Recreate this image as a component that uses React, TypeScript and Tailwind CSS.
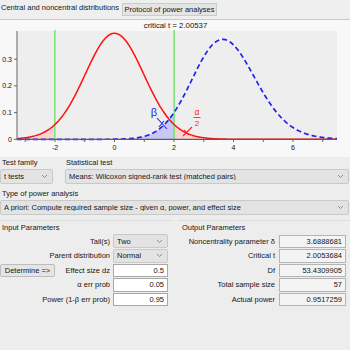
import React from "react";

const NU = 53.4309905;
const DELTA = 3.6888681;
const TC = 2.0053684;

function lgamma(x: number): number {
  const c = [
    0.99999999999980993, 676.5203681218851, -1259.1392167224028, 771.32342877765313,
    -176.61502916214059, 12.507343278686905, -0.13857109526572012, 9.9843695780195716e-6,
    1.5056327351493116e-7,
  ];
  if (x < 0.5) return Math.log(Math.PI / Math.sin(Math.PI * x)) - lgamma(1 - x);
  x -= 1;
  let a = c[0];
  const t = x + 7.5;
  for (let i = 1; i < 9; i++) a += c[i] / (x + i);
  return 0.5 * Math.log(2 * Math.PI) + (x + 0.5) * Math.log(t) - t + Math.log(a);
}

const LC = lgamma((NU + 1) / 2) - lgamma(NU / 2) - 0.5 * Math.log(NU * Math.PI);
function tpdf(t: number) {
  return Math.exp(LC - ((NU + 1) / 2) * Math.log(1 + (t * t) / NU));
}
const LG = lgamma(NU / 2);
function nctpdf(t: number) {
  const n = 300;
  const a = 0.4;
  const b = 1.8;
  const h = (b - a) / n;
  let sum = 0;
  for (let i = 0; i <= n; i++) {
    const s = a + i * h;
    const x = NU * s * s;
    const lf = (NU / 2 - 1) * Math.log(x) - x / 2 - (NU / 2) * Math.LN2 - LG;
    const g = Math.exp(lf) * 2 * NU * s;
    const z = t * s - DELTA;
    const phi = Math.exp((-z * z) / 2) / Math.sqrt(2 * Math.PI);
    const w = i === 0 || i === n ? 0.5 : 1;
    sum += w * s * phi * g;
  }
  return sum * h;
}

const X = (t: number) => 114.5 + t * 29.75;
const Y = (p: number) => 139.3 - p * 267;
const T0 = -3.28;
const T1 = 7.48;

function curve(f: (t: number) => number, a: number, b: number, step = 0.03) {
  const pts: string[] = [];
  for (let t = a; t < b; t += step) pts.push(`${X(t).toFixed(2)},${Y(f(t)).toFixed(2)}`);
  pts.push(`${X(b).toFixed(2)},${Y(f(b)).toFixed(2)}`);
  return pts;
}
function area(f: (t: number) => number, a: number, b: number) {
  const pts = curve(f, a, b, 0.02);
  return `M${X(a).toFixed(2)},${Y(0)} L${pts.join(" L")} L${X(b).toFixed(2)},${Y(0)} Z`;
}

function Chart() {
  const red = "M" + curve(tpdf, T0, T1).join(" L");
  const blue = "M" + curve(nctpdf, T0, T1).join(" L");
  const ticks: number[] = [];
  for (let i = -3; i <= 7; i++) ticks.push(i);
  const lbl = { fontFamily: '"Liberation Sans", Arial, sans-serif' };
  return (
    <svg width={350} height={137} viewBox="0 20 350 137" className="block">
      <rect x={0} y={20} width={350} height={137} fill="#f8f8f8" />
      <rect x={17} y={31} width={320} height={108.3} fill="#eeeeee" />
      <text x={175.5} y={27.5} fontSize={7.8} textAnchor="middle" fill="#111" style={lbl}>
        critical t = 2.00537
      </text>
      <path d={area(tpdf, T0, -TC)} fill="#fbd3d3" />
      <path d={area(tpdf, TC, T1)} fill="#fbd3d3" />
      <path d={area(nctpdf, T0, TC)} fill="#c9c9f7" />
      <line x1={X(-TC)} y1={30} x2={X(-TC)} y2={139.3} stroke="#66e266" strokeWidth={1.3} />
      <line x1={X(TC)} y1={30} x2={X(TC)} y2={139.3} stroke="#66e266" strokeWidth={1.3} />
      <path d={red} fill="none" stroke="#ff1010" strokeWidth={1.5} />
      <path d={blue} fill="none" stroke="#2222ee" strokeWidth={1.7} strokeDasharray="5 3" />
      {/* axes */}
      <line x1={17} y1={31} x2={17} y2={139.3} stroke="#666" strokeWidth={1} />
      <line x1={17} y1={139.3} x2={337} y2={139.3} stroke="#6b5656" strokeWidth={1.3} />
      {[0, 0.1, 0.2, 0.3].map((v) => (
        <g key={v}>
          <line x1={14} y1={Y(v)} x2={17} y2={Y(v)} stroke="#666" strokeWidth={1} />
          <text x={12} y={Y(v) + 2.5} fontSize={7} textAnchor="end" fill="#111" style={lbl}>
            {v === 0 ? "0" : v.toFixed(1)}
          </text>
        </g>
      ))}
      {ticks.map((t) => (
        <line key={t} x1={X(t)} y1={139.3} x2={X(t)} y2={142} stroke="#666" strokeWidth={1} />
      ))}
      {[-2, 0, 2, 4, 6].map((t) => (
        <text key={t} x={X(t)} y={149.5} fontSize={7} textAnchor="middle" fill="#111" style={lbl}>
          {t === -2 ? "-2" : String(t)}
        </text>
      ))}
      {/* beta label */}
      <text x={154} y={116} fontSize={11} textAnchor="middle" fill="#2828ee" style={lbl}>
        β
      </text>
      <line x1={157} y1={118} x2={167} y2={129} stroke="#2828ee" strokeWidth={1.1} />
      <line x1={159} y1={127} x2={164} y2={121} stroke="#2828ee" strokeWidth={1.1} />
      {/* alpha/2 label */}
      <text x={197} y={115} fontSize={8.5} textAnchor="middle" fill="#ff2222" style={lbl}>
        α
      </text>
      <line x1={193.5} y1={117.5} x2={200.5} y2={117.5} stroke="#ff2222" strokeWidth={0.9} />
      <text x={197} y={125.5} fontSize={8} textAnchor="middle" fill="#ff2222" style={lbl}>
        2
      </text>
      <line x1={192} y1={127} x2={183} y2={136} stroke="#ff2222" strokeWidth={1.1} />
      <line x1={184} y1={130} x2={189} y2={135} stroke="#ff2222" strokeWidth={1.1} />
    </svg>
  );
}

function Chevron() {
  return (
    <svg width={7} height={5} viewBox="0 0 7 5" className="shrink-0">
      <polyline points="1,1 3.5,3.5 6,1" fill="none" stroke="#8c8c8c" strokeWidth={1} />
    </svg>
  );
}

function Combo({ label, className }: { label: string; className: string }) {
  return (
    <div
      className={`flex items-center justify-between border border-[#c9c9c9] bg-[#e3e3e3] rounded-[2px] pl-[3px] pr-[4px] ${className}`}
    >
      <span className="whitespace-nowrap overflow-hidden">{label}</span>
      <Chevron />
    </div>
  );
}

function InBox({ v }: { v: string }) {
  return (
    <div className="h-[13.5px] w-[55px] border border-[#a8a8a8] bg-white flex items-center justify-end pr-[3px]">
      {v}
    </div>
  );
}
function OutBox({ v }: { v: string }) {
  return (
    <div className="h-[13.5px] w-[67px] border border-[#b4b4b4] bg-[#f4f4f4] flex items-center justify-end pr-[3px]">
      {v}
    </div>
  );
}

export default function App() {
  return (
    <div className="w-[350px] h-[350px] overflow-hidden bg-[#ededed] text-[#161616] text-[7.5px] leading-none font-['Liberation_Sans',Arial,sans-serif]">
      {/* tabs */}
      <div className="h-[20px] flex items-start border-b border-[#c8c8c8] bg-[#efefef]">
        <div className="h-[16px] pl-[1px] flex items-center whitespace-nowrap">
          Central and noncentral distributions
        </div>
        <div className="ml-[3px] mt-[3px] h-[13px] w-[95px] flex items-center justify-center whitespace-nowrap border border-[#cbcbcb] bg-[#e4e4e4]">
          Protocol of power analyses
        </div>
      </div>
      <Chart />
      {/* selectors */}
      <div className="flex">
        <div className="w-[53px] flex flex-col">
          <div className="h-[12px] pl-[2px] flex items-center">Test family</div>
          <Combo label="t tests" className="h-[15px]" />
        </div>
        <div className="ml-[12px] mr-[1px] flex-1 flex flex-col">
          <div className="h-[12px] pl-[1px] flex items-center">Statistical test</div>
          <Combo label="Means: Wilcoxon signed-rank test (matched pairs)" className="h-[15px]" />
        </div>
      </div>
      <div className="mt-[4px] h-[12px] pl-[2px] flex items-center">Type of power analysis</div>
      <div className="mr-[1px]">
        <Combo
          label="A priori: Compute required sample size - given α, power, and effect size"
          className="h-[15px]"
        />
      </div>
      {/* parameters */}
      <div className="mt-[5px] flex">
        <div className="w-[173px] border-t border-[#dcdcdc] pt-[1px]">
          <div className="h-[12px] pl-[2px] flex items-center">Input Parameters</div>
          <div className="flex flex-col">
            <div className="h-[14.5px] flex items-center">
              <div className="w-[110px] text-right">Tail(s)</div>
              <Combo label="Two" className="ml-[3px] w-[55px] h-[14px]" />
            </div>
            <div className="h-[14.5px] flex items-center">
              <div className="w-[110px] text-right">Parent distribution</div>
              <Combo label="Normal" className="ml-[3px] w-[55px] h-[14px]" />
            </div>
            <div className="h-[14.5px] flex items-center">
              <div className="w-[110px] flex items-center justify-between">
                <div className="h-[13px] w-[55px] border border-[#bdbdbd] bg-[#e5e5e5] rounded-[2px] flex items-center justify-center whitespace-nowrap">
                  Determine =&gt;
                </div>
                <span>Effect size dz</span>
              </div>
              <div className="ml-[3px]">
                <InBox v="0.5" />
              </div>
            </div>
            <div className="h-[14.5px] flex items-center">
              <div className="w-[110px] text-right">α err prob</div>
              <div className="ml-[3px]">
                <InBox v="0.05" />
              </div>
            </div>
            <div className="h-[14.5px] flex items-center">
              <div className="w-[110px] text-right">Power (1-β err prob)</div>
              <div className="ml-[3px]">
                <InBox v="0.95" />
              </div>
            </div>
          </div>
        </div>
        <div className="ml-[5px] flex-1 border-t border-[#dcdcdc] pt-[1px]">
          <div className="h-[12px] pl-[4px] flex items-center">Output Parameters</div>
          <div className="flex flex-col">
            {[
              ["Noncentrality parameter δ", "3.6888681"],
              ["Critical t", "2.0053684"],
              ["Df", "53.4309905"],
              ["Total sample size", "57"],
              ["Actual power", "0.9517259"],
            ].map(([l, v]) => (
              <div key={l} className="h-[14.5px] flex items-center">
                <div className="w-[97px] text-right whitespace-nowrap">{l}</div>
                <div className="ml-[4px]">
                  <OutBox v={v} />
                </div>
              </div>
            ))}
          </div>
        </div>
      </div>
    </div>
  );
}
